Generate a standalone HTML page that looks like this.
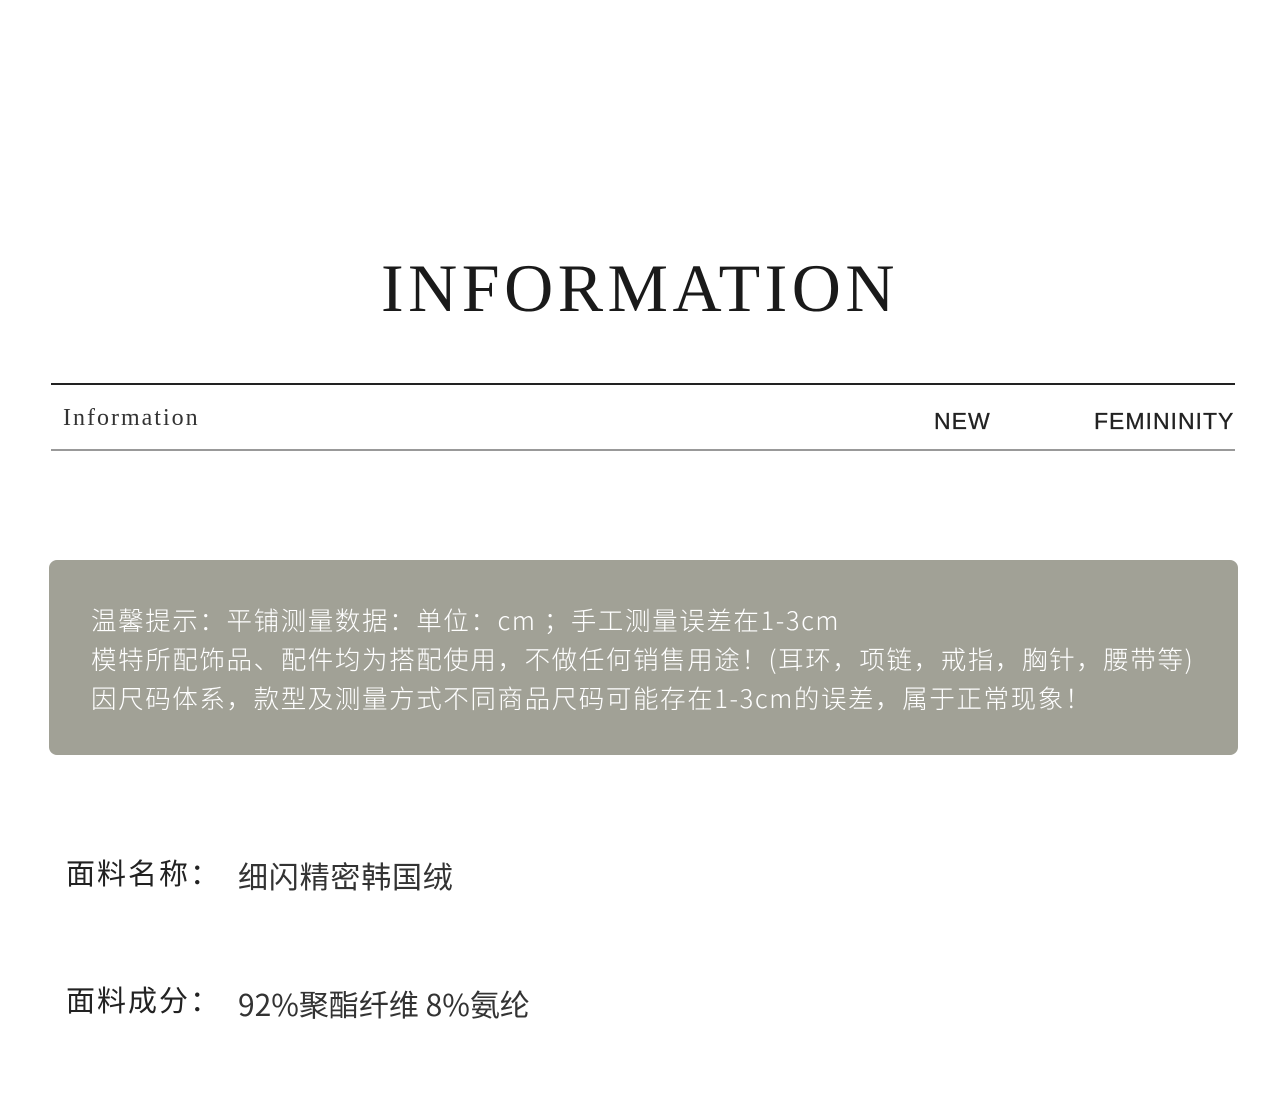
<!DOCTYPE html>
<html><head><meta charset="utf-8"><style>
body{margin:0;width:1280px;height:1096px;background:#fff;position:relative;overflow:hidden;font-family:"Noto Sans CJK SC","Liberation Sans",sans-serif}
.a{position:absolute;white-space:nowrap}
</style></head><body>
<div class="a" style="left:0;width:1280px;top:248px;text-align:center;font-family:'Liberation Serif',serif;font-size:68px;letter-spacing:4.5px;color:#1a1a1a;line-height:80px">INFORMATION</div>
<div class="a" style="left:51px;width:1184px;top:383px;height:2px;background:#222"></div>
<div class="a" style="left:51px;width:1184px;top:449px;height:2px;background:#999"></div>
<div class="a" style="left:63px;top:405px;font-family:'Liberation Serif',serif;font-size:24px;letter-spacing:2px;color:#333">Information</div>
<div class="a" style="left:934px;top:408px;font-family:'Liberation Sans',sans-serif;font-size:23px;letter-spacing:1px;color:#222;-webkit-text-stroke:0.3px #222">NEW</div>
<div class="a" style="left:1094px;top:408px;font-family:'Liberation Sans',sans-serif;font-size:23px;letter-spacing:1px;color:#222;-webkit-text-stroke:0.3px #222">FEMININITY</div>
<div class="a" style="left:49px;top:560px;width:1189px;height:195px;background:#a1a196;border-radius:8px"></div>
<div class="a" style="left:91px;top:600px;font-size:25.5px;line-height:39px;color:#fff;font-weight:300;letter-spacing:1.6px">温馨提示：平铺测量数据：单位：cm ；手工测量误差在1-3cm<br>模特所配饰品、配件均为搭配使用，不做任何销售用途！(耳环，项链，戒指，胸针，腰带等)<br>因尺码体系，款型及测量方式不同商品尺码可能存在1-3cm的误差，属于正常现象！</div>
<div class="a" style="left:66px;top:851px;font-size:29px;color:#222;letter-spacing:2px">面料名称：</div>
<div class="a" style="left:238px;top:853px;font-size:30px;color:#333;letter-spacing:0.8px">细闪精密韩国绒</div>
<div class="a" style="left:66px;top:978px;font-size:29px;color:#222;letter-spacing:2px">面料成分：</div>
<div class="a" style="left:238px;top:981px;font-size:30px;color:#333;letter-spacing:0px">92%聚酯纤维 8%氨纶</div>
</body></html>
